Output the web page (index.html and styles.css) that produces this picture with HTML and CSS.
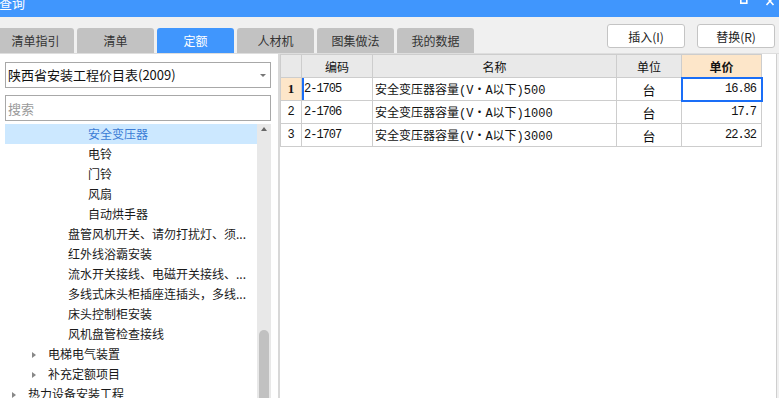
FILE: index.html
```html
<!DOCTYPE html>
<html lang="zh-CN">
<head>
    <meta charset="UTF-8">
    <meta name="viewport" content="width=device-width, initial-scale=1.0">
    <title>查询</title>

    <link rel="stylesheet" href="styles.css">
</head>
<body>
    <div class="titlebar">
        <span class="title">查询</span>
        <svg class="winctl" width="40" height="6" viewBox="0 0 40 6">
            <rect x="1.8" y="-4" width="6" height="7.2" fill="none" stroke="#fff" stroke-width="1.6"/>
            <path d="M27.5 -3 L34.5 5 M34.5 -3 L27.5 5" stroke="#fff" stroke-width="1.6" fill="none"/>
        </svg>
    </div>

    <div class="toolbar">
        <div class="tabs">
            <div class="tab">清单指引</div>
            <div class="tab">清单</div>
            <div class="tab on">定额</div>
            <div class="tab">人材机</div>
            <div class="tab">图集做法</div>
            <div class="tab">我的数据</div>
        </div>
        <div class="actions">
            <button class="btn">插入(I)</button>
            <button class="btn">替换(R)</button>
        </div>
    </div>

    <div class="main">
        <div class="side">
            <div class="select">陕西省安装工程价目表(2009)<span class="caret"></span></div>
            <input class="search" type="text" placeholder="搜索">

            <div class="tree">
                <div class="tree-list">
                    <div class="node lv3 active">安全变压器</div>
                    <div class="node lv3">电铃</div>
                    <div class="node lv3">门铃</div>
                    <div class="node lv3">风扇</div>
                    <div class="node lv3">自动烘手器</div>
                    <div class="node lv2">盘管风机开关、请勿打扰灯、须...</div>
                    <div class="node lv2">红外线浴霸安装</div>
                    <div class="node lv2">流水开关接线、电磁开关接线、...</div>
                    <div class="node lv2">多线式床头柜插座连插头，多线...</div>
                    <div class="node lv2">床头控制柜安装</div>
                    <div class="node lv2">风机盘管检查接线</div>
                    <div class="node lv1"><span class="arrow"></span>电梯电气装置</div>
                    <div class="node lv1"><span class="arrow"></span>补充定额项目</div>
                    <div class="node lv0"><span class="arrow"></span>热力设备安装工程</div>
                </div>
                <div class="vscroll">
                    <span class="up"></span>
                    <span class="thumb"></span>
                </div>
            </div>
        </div>

        <div class="grid-panel">
            <table class="grid">
                <colgroup>
                    <col class="c-no">
                    <col class="c-code">
                    <col class="c-name">
                    <col class="c-unit">
                    <col class="c-price">
                </colgroup>
                <tr class="head">
                    <th></th>
                    <th>编码</th>
                    <th>名称</th>
                    <th>单位</th>
                    <th class="hot">单价</th>
                </tr>
                <tr class="cur">
                    <td class="no">1</td>
                    <td class="code">2-1705</td>
                    <td class="name">安全变压器容量(V・A以下)500</td>
                    <td class="unit">台</td>
                    <td class="price picked">16.86</td>
                </tr>
                <tr>
                    <td class="no">2</td>
                    <td class="code">2-1706</td>
                    <td class="name">安全变压器容量(V・A以下)1000</td>
                    <td class="unit">台</td>
                    <td class="price">17.7</td>
                </tr>
                <tr>
                    <td class="no">3</td>
                    <td class="code">2-1707</td>
                    <td class="name">安全变压器容量(V・A以下)3000</td>
                    <td class="unit">台</td>
                    <td class="price">22.32</td>
                </tr>
            </table>
        </div>
    </div>
</body>
</html>
```

FILE: styles.css
```css
/* General styling */
body, html {
    margin: 0;
    padding: 0;
    width: 100%;
    height: 100%;
    overflow: hidden;
}

body {
    background-color: #f0f0f0;
    font-family: "Noto Sans CJK SC", sans-serif;
    font-size: 12px;
    color: #222;
}

/* Title bar */
.titlebar {
    height: 17px;
    background-color: #4096fd;
    display: flex;
    justify-content: space-between;
    overflow: hidden;
}

.title {
    color: #fff;
    font-size: 13px;
    line-height: 13px;
    margin-top: -4px;
    margin-left: -1px;
}

/* Tabs and buttons */
.toolbar {
    height: 36px;
    display: flex;
    justify-content: space-between;
}

.tabs {
    display: flex;
    gap: 3px;
    margin-left: -3px;
    align-self: flex-end;
}

.tab {
    width: 77px;
    height: 25px;
    line-height: 25px;
    text-align: center;
    background-color: #c2c2c2;
    color: #333;
    border-radius: 3px 3px 0 0;
}

.tab.on {
    background-color: #4096fd;
    color: #fff;
}

.actions {
    display: flex;
    gap: 12px;
    margin-top: 7px;
    margin-right: 4px;
}

.btn {
    width: 78px;
    height: 24px;
    padding: 0;
    background-color: #fff;
    border: 1px solid #c4c4c4;
    border-radius: 3px;
    font: inherit;
    color: #222;
}

/* Main area */
.main {
    display: flex;
    height: 344px;
    border-top: 1px solid #dedede;
}

.side {
    width: 279px;
    box-sizing: border-box;
    padding: 8px 7px 0 5px;
    background-color: #fff;
    border-right: 1px solid #d8d8d8;
    display: flex;
    flex-direction: column;
}

.select {
    position: relative;
    height: 26px;
    box-sizing: border-box;
    padding-left: 2px;
    border: 1px solid #a8a8a8;
    font-size: 13px;
    line-height: 24px;
    color: #111;
}

.caret {
    position: absolute;
    right: 4px;
    top: 11px;
    border-top: 3px solid #777;
    border-left: 3px solid transparent;
    border-right: 3px solid transparent;
}

.search {
    margin-top: 7px;
    height: 26px;
    box-sizing: border-box;
    padding: 0 2px;
    border: 1px solid #a8a8a8;
    font-family: inherit;
    font-size: 13px;
    outline: none;
}

.search::placeholder {
    color: #9a9a9a;
}

/* Tree */
.tree {
    margin-top: 3px;
    flex: 1;
    display: flex;
    overflow: hidden;
}

.tree-list {
    flex: 1;
    min-width: 0;
}

.node {
    height: 20px;
    line-height: 20px;
    white-space: nowrap;
    overflow: hidden;
    color: #1a1a1a;
}

.node.active {
    background-color: #cce8ff;
    color: #3a7bd5;
}

.lv0 { padding-left: 7px; }
.lv1 { padding-left: 27px; }
.lv2 { padding-left: 63px; }
.lv3 { padding-left: 83px; }

.arrow {
    display: inline-block;
    width: 0;
    height: 0;
    margin-right: 12px;
    vertical-align: 1px;
    border-left: 4px solid #888;
    border-top: 3.5px solid transparent;
    border-bottom: 3.5px solid transparent;
}

.vscroll {
    position: relative;
    width: 14px;
    background-color: #e8e8e8;
}

.vscroll .up {
    position: absolute;
    left: 4px;
    top: 3px;
    border-bottom: 4px solid #666;
    border-left: 3px solid transparent;
    border-right: 3px solid transparent;
}

.vscroll .thumb {
    position: absolute;
    left: 2px;
    right: 2px;
    top: 206px;
    bottom: 0;
    background-color: #c1c1c1;
    border-radius: 5px 5px 0 0;
}

/* Grid */
.grid-panel {
    flex: 1;
    margin-right: 2px;
    background-color: #fff;
    border-left: 1px solid #d8d8d8;
    border-right: 1px solid #cfcfcf;
}

.grid {
    border-collapse: collapse;
    table-layout: fixed;
    width: 481px;
}

.c-no { width: 21px; }
.c-code { width: 71px; }
.c-name { width: 244px; }
.c-unit { width: 65px; }
.c-price { width: 80px; }

.grid th, .grid td {
    height: 22px;
    padding: 0 2px;
    border: 1px solid #cdcdcd;
    white-space: nowrap;
    overflow: hidden;
    color: #111;
}

.grid th {
    background-color: #e9e9e9;
    font-weight: normal;
    text-align: center;
}

.grid th.hot {
    background-color: #fde6c9;
    font-weight: bold;
}

.grid td.no {
    padding: 0;
    text-align: center;
    font-family: "Liberation Mono", monospace;
    font-size: 12px;
}

.cur td.no {
    background-color: #fde6c9;
    font-family: "Liberation Serif", serif;
    font-weight: bold;
    font-size: 13px;
}

.cur td.code {
    box-shadow: inset 2px 0 0 #1a6ef7;
}

.grid td.code, .grid td.price {
    font-family: "Liberation Mono", monospace;
    font-size: 12px;
    letter-spacing: -1px;
}

.grid td.name {
    font-family: "Liberation Mono", "Noto Sans CJK SC", monospace;
    font-size: 12px;
}

.grid td.unit {
    text-align: center;
    font-size: 13px;
}

.grid td.price {
    text-align: right;
    padding-right: 5px;
}

.grid td.picked {
    outline: 2px solid #1a6ef7;
    outline-offset: -1px;
}
```
